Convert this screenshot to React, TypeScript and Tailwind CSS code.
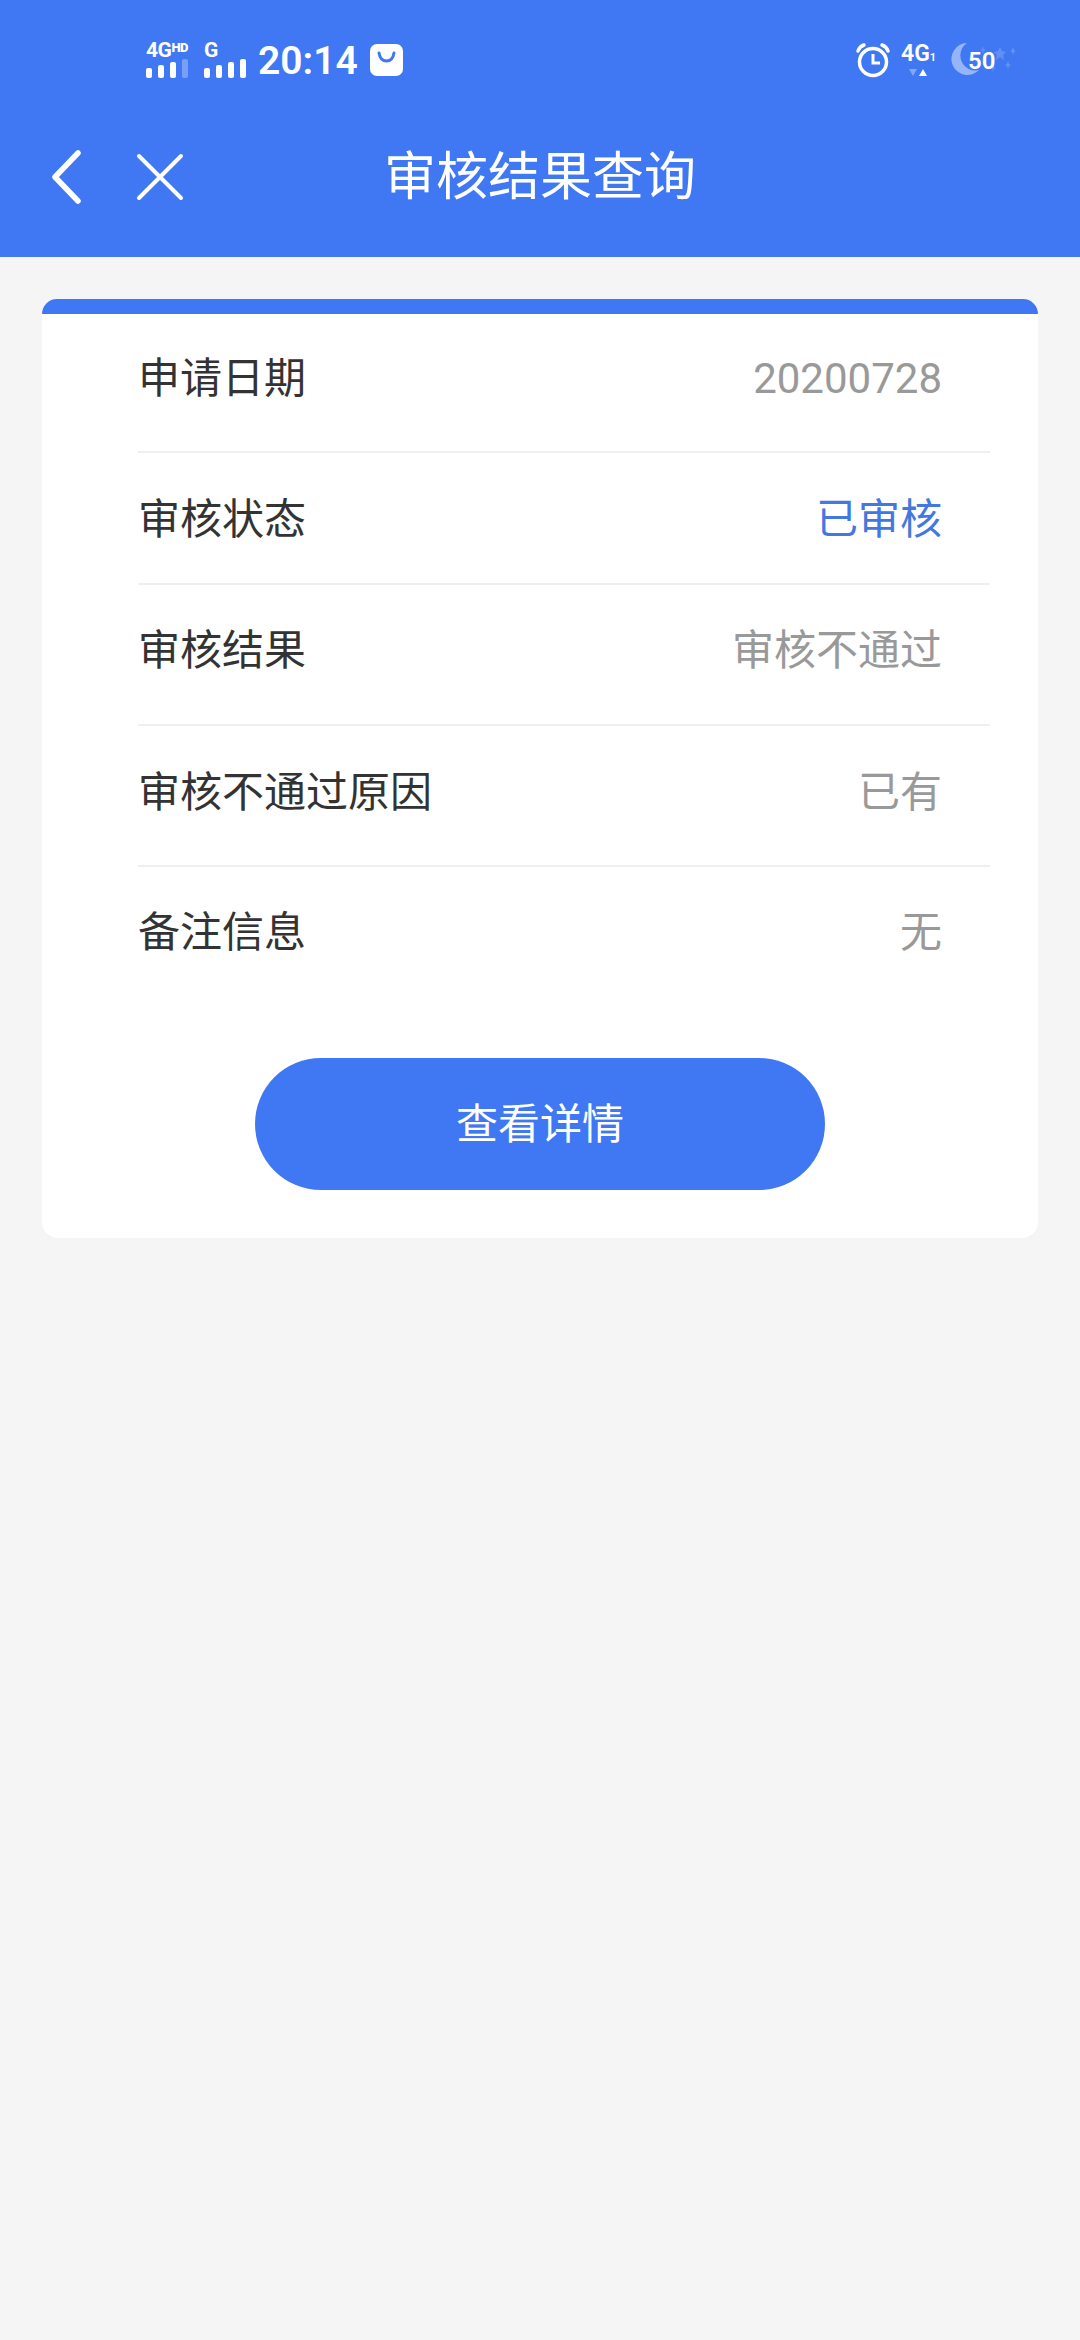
const rows = [
  { label: "申请日期", value: "20200728", color: "text-[#999999]", cls: "h-[139px] pb-[8px]" },
  { label: "审核状态", value: "已审核", color: "text-[#4278e0]", cls: "h-[132px] pt-[3px]" },
  { label: "审核结果", value: "审核不通过", color: "text-[#999999]", cls: "h-[141px] pb-[7px]" },
  { label: "审核不通过原因", value: "已有", color: "text-[#999999]", cls: "h-[141px] pb-[6px]" },
  { label: "备注信息", value: "无", color: "text-[#999999]", cls: "h-[130px] pt-[2px]" },
];

function Bars({ dim }: { dim?: boolean }) {
  const heights = [10, 13, 16, 19];
  return (
    <div className="flex h-[19px] items-end gap-[6px]">
      {heights.map((h, i) => (
        <span
          key={i}
          className={`w-[6px] rounded-[2px] ${dim && i === 3 ? "bg-white/30" : "bg-white"}`}
          style={{ height: h }}
        />
      ))}
    </div>
  );
}

function StatusBar() {
  return (
    <div className="flex h-[86px] items-center justify-between pl-[146px] pr-[64px] pt-[34px] text-white">
      <div className="flex items-center">
        <div className="flex w-[58px] flex-col">
          <div className="flex h-[15px] items-start text-[21px] font-bold leading-[15px] tracking-[-0.5px]">
            4G<span className="text-[13px] font-black leading-[10px]">HD</span>
          </div>
          <div className="mt-[1px]">
            <Bars dim />
          </div>
        </div>
        <div className="flex w-[54px] flex-col">
          <div className="h-[15px] text-[21px] font-bold leading-[15px]">G</div>
          <div className="mt-[1px]">
            <Bars />
          </div>
        </div>
        <span className="mt-[2px] text-[39px] font-semibold leading-none">20:14</span>
        <svg className="ml-[12px]" width="33" height="32" viewBox="0 0 33 32">
          <rect width="33" height="32" rx="7" fill="#fff" />
          <path d="M9 9c1 6 4 8 7.500 8s6.500-2 7.500-8" fill="none" stroke="#3f78f2" strokeWidth="3" strokeLinecap="round" />
        </svg>
      </div>
      <div className="flex items-center">
        <svg width="36" height="36" viewBox="0 0 36 36" fill="none" stroke="#fff">
          <circle cx="18" cy="20" r="13.500" strokeWidth="3.500" />
          <path d="M18 12v9h7" strokeWidth="3" />
          <path d="M3 9c1-3 3-5 6-6M33 9c-1-3-3-5-6-6" strokeWidth="3.500" strokeLinecap="round" />
        </svg>
        <div className="ml-[10px] flex w-[34px] flex-col">
          <div className="h-[20px] text-[23px] font-semibold leading-[20px]">
            4G<span className="text-[11px]">1</span>
          </div>
          <svg className="ml-[8px] mt-[5px]" width="18" height="8" viewBox="0 0 18 8">
            <path d="M0 0h8l-4 7z" fill="#fff" fillOpacity="0.35" />
            <path d="M10 7h8l-4-7z" fill="#fff" />
          </svg>
        </div>
        <div className="relative ml-[15px] h-[36px] w-[66px]">
          <svg className="absolute left-0 top-0" width="66" height="36" viewBox="0 0 66 36" fill="#fff">
            <path d="M17 1a16 16 0 1 0 12 27A15 15 0 0 1 17 1z" fillOpacity="0.45" />
            <path d="M50 5l2 4 4 1-3 3 1 5-4-3-4 3 1-5-3-3 4-1z" fillOpacity="0.18" />
            <path d="M63 5l1 3 2 1-2 1-1 3-1-3-2-1 2-1z" fillOpacity="0.2" />
            <path d="M58 19l1 3 2 1-2 1-1 3-1-3-2-1 2-1z" fillOpacity="0.2" />
            <path d="M33 4l1 3 2 1-2 1-1 3-1-3-2-1 2-1z" fillOpacity="0.15" />
            <path d="M43 22l1 3 2 1-2 1-1 3-1-3-2-1 2-1z" fillOpacity="0.15" />
          </svg>
          <span className="absolute left-[18px] top-[7px] text-[24px] font-semibold leading-none">50</span>
        </div>
      </div>
    </div>
  );
}

export default function App() {
  return (
    <div className="flex min-h-[2340px] flex-col bg-[#f5f5f5] font-['Roboto','Noto_Sans_CJK_SC',sans-serif]">
      <header className="h-[257px] bg-[#3f78f2]">
        <StatusBar />
        <div className="grid h-[171px] grid-cols-[1fr_auto_1fr] items-center pt-[12px]">
          <div className="flex items-center pb-[2px] pl-[49px]">
            <svg width="32" height="54" viewBox="0 0 32 54" fill="none" stroke="#fff" strokeWidth="5.500" strokeLinecap="round" strokeLinejoin="round">
              <path d="M29 3L6 27l23 24" />
            </svg>
            <svg className="ml-[54px]" width="50" height="50" viewBox="0 0 50 50" fill="none" stroke="#fff" strokeWidth="4" strokeLinecap="round">
              <path d="M4 4l42 42M46 4L4 46" />
            </svg>
          </div>
          <h1 className="text-[52px] font-normal leading-none text-white">审核结果查询</h1>
        </div>
      </header>

      <main className="mx-[42px] mt-[42px]">
        <div className="h-[15px] rounded-t-[16px] bg-[#3f78f2]" />
        <div className="rounded-b-[16px] bg-white pb-[48px]">
          <div className="pl-[96px] pr-[48px]">
            {rows.map((row, i) => (
              <div
                key={row.label}
                className={`flex items-center justify-between pr-[48px] text-[42px] leading-none ${row.cls} ${i < rows.length - 1 ? "border-b-2 border-[#efefef]" : ""}`}
              >
                <span className="text-[#333333]">{row.label}</span>
                <span className={row.color}>{row.value}</span>
              </div>
            ))}
          </div>
          <div className="mt-[61px] flex justify-center">
            <button className="h-[132px] w-[570px] rounded-full bg-[#3f78f2] text-[42px] text-white">查看详情</button>
          </div>
        </div>
      </main>
    </div>
  );
}
